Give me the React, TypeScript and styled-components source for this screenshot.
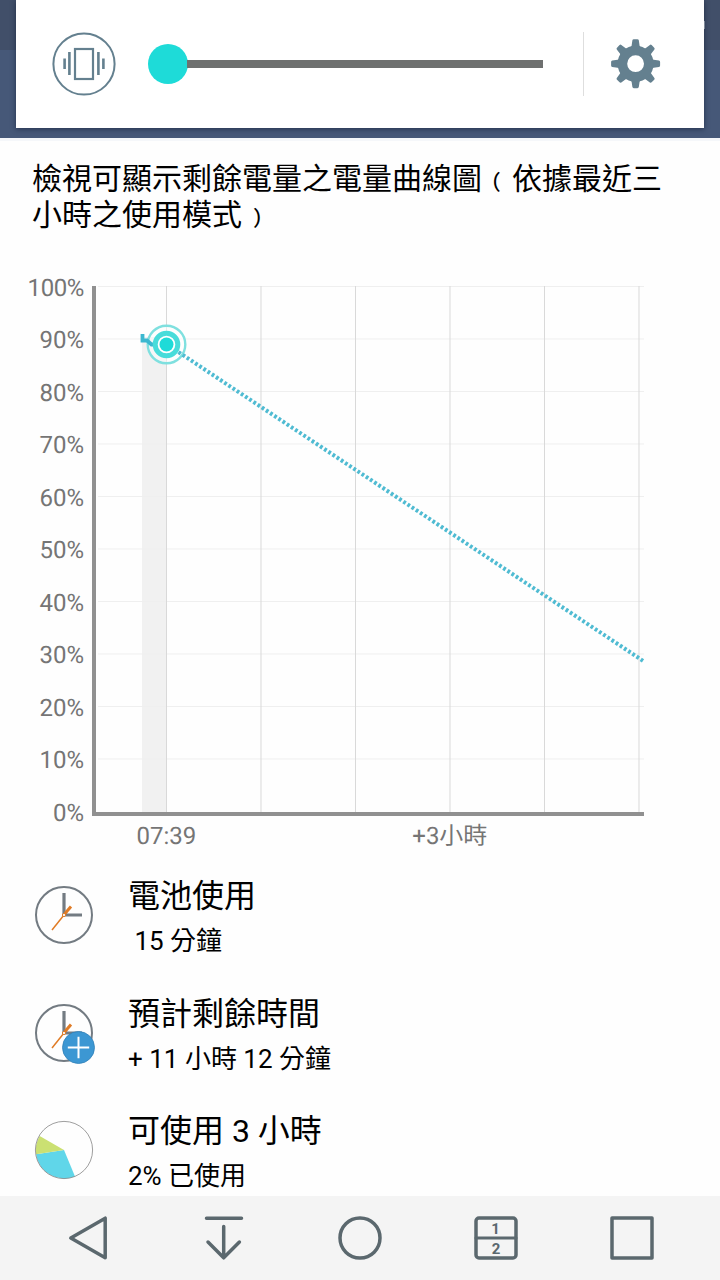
import React from "react";
import styled, { createGlobalStyle } from "styled-components";

const GlobalStyle = createGlobalStyle`
  * { box-sizing: border-box; }
  body { margin: 0; background: #fefefe; }
`;

const slate = "#64808f";
const navColor = "#5b686e";
const sans = `Roboto, "Noto Sans CJK TC", sans-serif`;

const Screen = styled.div`
  width: 720px;
  height: 1280px;
  display: flex;
  flex-direction: column;
  overflow: hidden;
  background: #fefefe;
  color: #000;
  font-family: ${sans};
`;

const Header = styled.header`
  flex: none;
  height: 141px;
  padding: 0 16px;
  background: linear-gradient(#414f69 0 50px, #465878 50px 138px, #f5f7fa 138px);
`;

const VolumePanel = styled.div`
  position: relative;
  height: 128px;
  padding: 0 43px 0 36px;
  display: flex;
  align-items: center;
  background: #fff;
  box-shadow: 0 1px 5px rgba(15, 25, 50, 0.6);
  clip-path: inset(0 -10px -10px -10px);

  &::after {
    content: "";
    position: absolute;
    left: 688px;
    top: 21px;
    width: 1px;
    height: 8px;
    background: #808a9a;
  }
`;

const Slider = styled.div`
  display: flex;
  align-items: center;
  width: 395px;
  margin-left: 32px;
`;

const Thumb = styled.div`
  flex: none;
  width: 40px;
  height: 40px;
  border-radius: 50%;
  background: #1edbd8;
`;

const Track = styled.div`
  flex: 1;
  height: 8px;
  margin-left: -1px;
  background: #6e706f;
`;

const Divider = styled.div`
  flex: none;
  width: 1px;
  height: 64px;
  margin: 0 27px 0 40px;
  background: #dedede;
`;

const Description = styled.p`
  flex: none;
  height: 125px;
  margin: 0;
  padding: 20px 32px 0;
  font-size: 30px;
  line-height: 36px;
  white-space: nowrap;
`;

const Chart = styled.section`
  flex: none;
  height: 601px;
  display: flex;
  color: #757575;
  font-size: 24px;
`;

const Scale = styled.div`
  width: 84px;
  padding-top: 7.5px;
  text-align: right;
  text-rendering: geometricPrecision;
`;

const ScaleLabel = styled.div<{ $tight?: boolean }>`
  height: 52.55px;
  line-height: 28px;
  letter-spacing: ${(p) => (p.$tight ? "-0.4px" : "normal")};
`;

const Plot = styled.div`
  width: 556px;
  margin-left: 8px;
  padding-top: 18px;
`;

const PlotDrawing = styled.svg`
  display: block;
`;

const TimeAxis = styled.div`
  display: flex;
  padding-left: 44.5px;
  line-height: 36px;
  text-rendering: geometricPrecision;
`;

const TimeLabel = styled.span<{ $gap?: number }>`
  margin-left: ${(p) => p.$gap ?? 0}px;
`;

const Stats = styled.section`
  flex: 1;
  min-height: 0;
  display: flex;
  flex-direction: column;
`;

const StatRow = styled.div`
  flex: none;
  height: 117.5px;
  display: flex;
  padding-left: 32px;
`;

const StatIcon = styled.svg`
  flex: none;
  margin-top: 16.25px;
`;

const StatText = styled.div`
  margin-left: 32px;
  padding-top: 7px;
`;

const StatTitle = styled.div`
  font-size: 32px;
  line-height: 44px;
`;

const StatValue = styled.div`
  font-size: 26px;
  line-height: 46px;
  white-space: pre;
`;

const NavBar = styled.nav`
  flex: none;
  height: 84px;
  padding: 0 20px;
  display: flex;
  background: #f4f4f4;
`;

const NavButton = styled.button`
  flex: 1;
  padding: 0;
  border: 0;
  display: flex;
  align-items: center;
  justify-content: center;
  background: none;
`;

const VibrateIcon = () => (
  <svg width="64" height="64" viewBox="0 0 64 64" fill="none" stroke={slate}>
    <circle cx="32" cy="32" r="30.6" strokeWidth="2" />
    <rect x="23" y="17" width="18" height="30" strokeWidth="2.2" />
    <path d="M17.4 20v23M46.4 20v23" strokeWidth="2.6" />
    <path d="M12.6 26.5v10.5M51.4 26.5v10.5" strokeWidth="2.6" />
  </svg>
);

const GearIcon = () => (
  <svg width="50" height="50" viewBox="-24.6 -24.7 50 50" fill={slate}>
    {[0, 45, 90, 135, 180, 225, 270, 315].map((a) => (
      <path
        key={a}
        transform={`rotate(${a})`}
        d="M-5.2 -15L-4 -18L-3.2 -23.4Q-3 -24.5 -1.8 -24.5H1.8Q3 -24.5 3.2 -23.4L4 -18L5.2 -15Z"
      />
    ))}
    <circle r="13.2" fill="none" stroke={slate} strokeWidth="9.6" />
  </svg>
);

const levels = [100, 90, 80, 70, 60, 50, 40, 30, 20, 10, 0];
const hours = [74.5, 169, 263.5, 358, 452.5, 547];

const BatteryPlot = () => (
  <PlotDrawing width="556" height="534" viewBox="0 0 556 534" fill="none">
    <rect x="50" y="53" width="24" height="475" fill="#f1f1f1" />
    {levels.slice(0, 10).map((level, i) => (
      <path key={level} d={`M6 ${2.5 + i * 52.5}H552`} stroke="#efefef" />
    ))}
    {hours.map((x) => (
      <path key={x} d={`M${x} 2V528`} stroke="#d9d9d9" />
    ))}
    <path d="M0 2H4V528H552V532H0Z" fill="#909090" />
    <circle cx="74.5" cy="60.5" r="18.8" stroke="#7fe0df" strokeWidth="2.4" fill="#fff" fillOpacity=".45" />
    <path
      d="M86.5 68.1L551 376.8"
      stroke="#4fbbd2"
      strokeWidth="4"
      strokeDasharray="2.8 2.2"
    />
    <path d="M50.5 50V56.5H55L59.5 60.5H66" stroke="#3cb8d0" strokeWidth="3.8" />
    <circle cx="74.5" cy="60.5" r="11.3" stroke="#48dcda" strokeWidth="5" fill="#fff" />
    <circle cx="74.5" cy="60.5" r="7" fill="#1edbd8" />
  </PlotDrawing>
);

const ClockFace = () => (
  <g fill="none">
    <circle cx="32" cy="32" r="28" stroke="#737b82" strokeWidth="2" />
    <path d="M32 10V32H50" stroke="#737b82" strokeWidth="3.2" />
    <path d="M20 47L34 29.5" stroke="#e07b25" strokeWidth="1.5" />
    <path d="M33 30.5L39 23.5" stroke="#e07b25" strokeWidth="3" />
    <circle cx="32" cy="32" r="1.6" stroke="#e07b25" strokeWidth="1" fill="#fff" />
  </g>
);

const ClockIcon = () => (
  <StatIcon width="64" height="66" viewBox="0 0 64 66">
    <ClockFace />
  </StatIcon>
);

const ClockPlusIcon = () => (
  <StatIcon width="64" height="66" viewBox="0 0 64 66">
    <ClockFace />
    <circle cx="46.5" cy="46.5" r="16" fill="#3c97d3" stroke="#3080b8" strokeWidth=".8" />
    <path d="M35.8 46.5H57.2M46.5 35.8V57.2" stroke="#fff" strokeWidth="2" />
  </StatIcon>
);

const PieIcon = () => (
  <StatIcon width="64" height="66" viewBox="0 0 64 66">
    <path d="M32 32L4 36.2A28.5 28.5 0 0 0 43 58.5Z" fill="#60d6e9" />
    <path d="M32 32L4 36.2A28.5 28.5 0 0 1 7.7 18Z" fill="#cbe072" />
    <circle cx="32" cy="32" r="28.6" fill="none" stroke="#858585" strokeWidth=".8" />
  </StatIcon>
);

const NavIcon = ({ children }: { children: React.ReactNode }) => (
  <svg
    width="48"
    height="48"
    viewBox="-24 -24 48 48"
    fill="none"
    stroke={navColor}
    strokeWidth="3.5"
    strokeLinecap="round"
    strokeLinejoin="round"
  >
    {children}
  </svg>
);

const stats = [
  { Icon: ClockIcon, title: "電池使用", value: " 15 分鐘" },
  { Icon: ClockPlusIcon, title: "預計剩餘時間", value: "+ 11 小時 12 分鐘" },
  { Icon: PieIcon, title: "可使用 3 小時", value: "2% 已使用" },
];

export default function App() {
  return (
    <Screen lang="zh-TW">
      <GlobalStyle />
      <Header>
        <VolumePanel>
          <VibrateIcon />
          <Slider>
            <Thumb />
            <Track />
          </Slider>
          <Divider />
          <GearIcon />
        </VolumePanel>
      </Header>
      <Description>
        檢視可顯示剩餘電量之電量曲線圖﹙依據最近三
        <br />
        小時之使用模式﹚
      </Description>
      <Chart>
        <Scale>
          {levels.map((level) => (
            <ScaleLabel key={level} $tight={level === 100}>
              {level}%
            </ScaleLabel>
          ))}
        </Scale>
        <Plot>
          <BatteryPlot />
          <TimeAxis>
            <TimeLabel>07:39</TimeLabel>
            <TimeLabel $gap={216}>+3小時</TimeLabel>
          </TimeAxis>
        </Plot>
      </Chart>
      <Stats>
        {stats.map(({ Icon, title, value }) => (
          <StatRow key={title}>
            <Icon />
            <StatText>
              <StatTitle>{title}</StatTitle>
              <StatValue>{value}</StatValue>
            </StatText>
          </StatRow>
        ))}
      </Stats>
      <NavBar>
        <NavButton aria-label="Back">
          <NavIcon>
            <path d="M17.2 -19.8V19.8L-17.2 0Z" />
          </NavIcon>
        </NavButton>
        <NavButton aria-label="Notifications">
          <NavIcon>
            <path d="M-17.5 -19.8H17.5M-0.3 -11.5V19.5M-16 4L-0.3 19.8L15.4 4" />
          </NavIcon>
        </NavButton>
        <NavButton aria-label="Home">
          <NavIcon>
            <circle r="20" />
          </NavIcon>
        </NavButton>
        <NavButton aria-label="Split screen">
          <NavIcon>
            <rect x="-20" y="-20" width="40" height="40" rx="3" />
            <path d="M-20 0H20" strokeWidth="3" />
            <g
              fill={navColor}
              stroke="none"
              textAnchor="middle"
              fontFamily="Roboto, sans-serif"
              fontSize="15"
              fontWeight="700"
            >
              <text x="-0.5" y="-4.3">1</text>
              <text x="0" y="15.7">2</text>
            </g>
          </NavIcon>
        </NavButton>
        <NavButton aria-label="Recent apps">
          <NavIcon>
            <rect x="-20" y="-20" width="40" height="40" />
          </NavIcon>
        </NavButton>
      </NavBar>
    </Screen>
  );
}
